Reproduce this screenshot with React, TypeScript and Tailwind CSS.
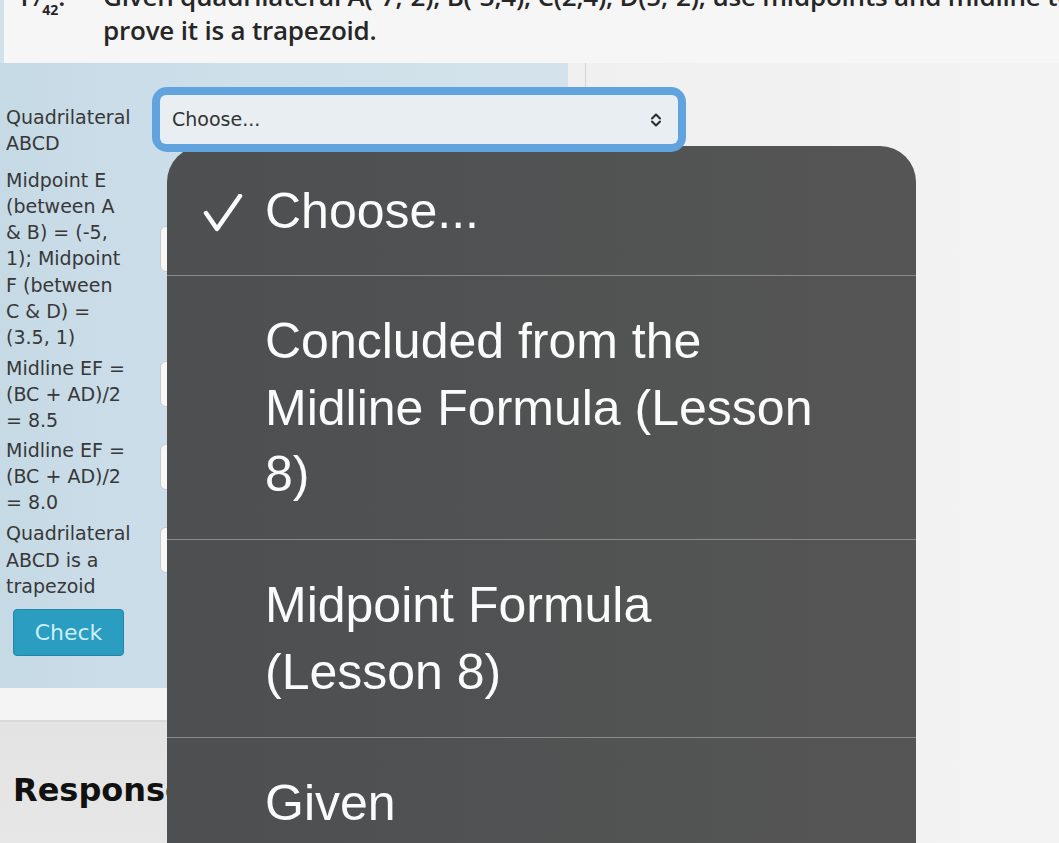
import React from "react";

const labelFont = { fontFamily: "'DejaVu Sans', Verdana, sans-serif" };

function Lines({ lines }: { lines: string[] }) {
  return (
    <div>
      {lines.map((l, i) => (
        <div key={i} className="whitespace-nowrap">
          {l}
        </div>
      ))}
    </div>
  );
}

function ClosedSelect({ top }: { top: string }) {
  return (
    <div
      className={`${top} h-[46px] w-[517px] ml-[8px] rounded-[6px] border border-[#c9c9c9] bg-[#f7f7f7]`}
    />
  );
}

function UpDown() {
  return (
    <svg width="12" height="18" viewBox="0 0 12 18" fill="none">
      <path d="M2 7.5 L6 3.5 L10 7.5" stroke="#2a2a2a" strokeWidth="2" strokeLinecap="round" strokeLinejoin="round" />
      <path d="M2 10.5 L6 14.5 L10 10.5" stroke="#2a2a2a" strokeWidth="2" strokeLinecap="round" strokeLinejoin="round" />
    </svg>
  );
}

export default function App() {
  return (
    <div className="relative w-[1059px] h-[843px] overflow-hidden bg-gradient-to-r from-[#ececec] to-[#f3f3f3]">
      {/* question header */}
      <div className="h-[63px] overflow-hidden border-l-4 border-[#d2e2eb] bg-[#f6f6f6]">
        <div
          className="flex -mt-[21px] text-[26px] leading-[34px] font-semibold text-[#262626]"
          style={{ fontFamily: "'Open Sans', sans-serif" }}
        >
          <div className="w-[99px] shrink-0 pl-[12px] whitespace-nowrap">
            <span>1</span>
            <span className="text-[20px]">7</span>
            <span className="relative top-[9px] text-[14px] font-bold">42</span>
            <span>.</span>
          </div>
          <div className="whitespace-nowrap tracking-[-0.2px]">
            <div>Given quadrilateral A(-7,-2), B(-3,4), C(2,4), D(5,-2), use midpoints and midline to</div>
            <div>prove it is a trapezoid.</div>
          </div>
        </div>
      </div>

      <div className="flex">
        <div className="w-[568px] shrink-0">
          {/* proof panel */}
          <div
            className="h-[625px] bg-gradient-to-r from-[#c6dae6] via-[#cfe0ea] to-[#d4e3eb] pt-[24px] text-[19px] leading-[26.3px] text-[#383838]"
            style={labelFont}
          >
            <div className="flex">
              <div className="w-[152px] shrink-0 pl-[6px] pt-[17px]">
                <Lines lines={["Quadrilateral", "ABCD"]} />
              </div>
              <div className="relative z-10 h-[65px] w-[534px] shrink-0 rounded-[15px] bg-[#60a3df] p-[8px]">
                <div className="flex h-full items-center justify-between rounded-[6px] bg-[#e8eef1] pl-[12px] pr-[16px]">
                  <span className="text-[19px] text-[#333]">Choose...</span>
                  <UpDown />
                </div>
              </div>
            </div>

            <div className="mt-[10px] flex">
              <div className="w-[152px] shrink-0 pl-[6px]">
                <Lines
                  lines={[
                    "Midpoint E",
                    "(between A",
                    "& B) = (-5,",
                    "1); Midpoint",
                    "F (between",
                    "C & D) =",
                    "(3.5, 1)",
                  ]}
                />
              </div>
              <ClosedSelect top="mt-[59px]" />
            </div>

            <div className="mt-[4px] flex">
              <div className="w-[152px] shrink-0 pl-[6px]">
                <Lines lines={["Midline EF =", "(BC + AD)/2", "= 8.5"]} />
              </div>
              <ClosedSelect top="mt-[6px]" />
            </div>

            <div className="mt-[3px] flex">
              <div className="w-[152px] shrink-0 pl-[6px]">
                <Lines lines={["Midline EF =", "(BC + AD)/2", "= 8.0"]} />
              </div>
              <ClosedSelect top="mt-[7px]" />
            </div>

            <div className="mt-[5px] flex">
              <div className="w-[152px] shrink-0 pl-[6px]">
                <Lines lines={["Quadrilateral", "ABCD is a", "trapezoid"]} />
              </div>
              <ClosedSelect top="mt-[7px]" />
            </div>

            <div className="mt-[10px] pl-[13px]">
              <button className="flex h-[47px] w-[111px] items-center justify-center rounded-[4px] border border-[#2386a6] bg-[#2a9dc1] text-[22px] text-[#cdeff9]">
                Check
              </button>
            </div>
          </div>

          <div className="h-[32px] bg-[#f4f4f4]" />
          <div className="h-[200px] border-t-2 border-[#d9d9d9] bg-gradient-to-b from-[#e3e3e3] to-[#e9e9e9] pl-[13px] pt-[48px]" style={labelFont}>
            <div className="text-[32px] font-bold leading-[40px] text-[#111]">Response</div>
            <div className="mt-[30px] text-[19px] text-[#222]">Score: The</div>
          </div>
        </div>
        <div className="ml-[17px] h-[780px] w-px bg-[#d5d5d5]" />
      </div>

      {/* open picker menu */}
      <div
        className="absolute left-[167px] top-[146px] h-[720px] w-[749px] rounded-t-[36px] bg-gradient-to-r from-[#4d4f50] to-[#555555] text-[50px] leading-[66.5px] text-[#fbfbfb]"
        style={{ fontFamily: "'Liberation Sans', Arial, sans-serif" }}
      >
        <div className="relative h-[130px] pl-[98px] pt-[32px] border-b border-[#8a8a8a]">
          <svg className="absolute left-[36px] top-[48px]" width="40" height="40" viewBox="0 0 40 40" fill="none">
            <path d="M3 19 L14 35 L37 2" stroke="#fbfbfb" strokeWidth="4.5" strokeLinecap="round" strokeLinejoin="round" />
          </svg>
          <div>Choose...</div>
        </div>
        <div className="h-[264px] pl-[98px] pt-[32px] border-b border-[#8a8a8a]">
          <div>Concluded from the</div>
          <div>Midline Formula (Lesson</div>
          <div>8)</div>
        </div>
        <div className="h-[198px] pl-[98px] pt-[32px] border-b border-[#8a8a8a]">
          <div>Midpoint Formula</div>
          <div>(Lesson 8)</div>
        </div>
        <div className="pl-[98px] pt-[32px]">
          <div>Given</div>
        </div>
      </div>
    </div>
  );
}
